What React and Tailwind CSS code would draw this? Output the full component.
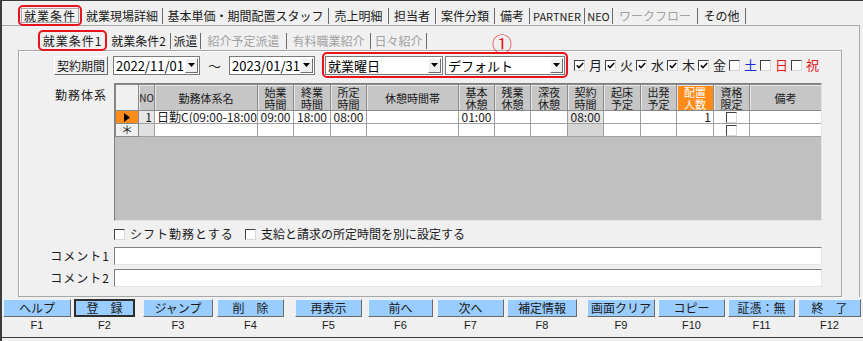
import React from "react";

const topTabs = [
  { t: "就業現場詳細", w: "w-[81px]" },
  { t: "基本単価・期間配置スタッフ", w: "w-[166px]" },
  { t: "売上明細", w: "w-[60px]" },
  { t: "担当者", w: "w-[47px]" },
  { t: "案件分類", w: "w-[59px]" },
  { t: "備考", w: "w-[35px]" },
  { t: "PARTNER", w: "w-[55px] text-[11px]" },
  { t: "NEO", w: "w-[28px] text-[11px]" },
  { t: "ワークフロー", w: "w-[85px]", off: true },
  { t: "その他", w: "w-[48px]" },
];

const subTabs = [
  { t: "就業条件2", w: "w-[64px]" },
  { t: "派遣", w: "w-[30px]" },
  { t: "紹介予定派遣", w: "w-[86px]", off: true },
  { t: "有料職業紹介", w: "w-[84px]", off: true },
  { t: "日々紹介", w: "w-[56px]", off: true },
];

const days = [
  { t: "月", on: true },
  { t: "火", on: true },
  { t: "水", on: true },
  { t: "木", on: true },
  { t: "金", on: true },
  { t: "土", c: "text-[#1d2bd8]" },
  { t: "日", c: "text-[#e8141c]" },
  { t: "祝", c: "text-[#e8141c]" },
];

const fkeys = [
  { t: "ヘルプ", f: "F1", cls: "ml-[1px] w-[68px]" },
  { t: "登　録", f: "F2", cls: "ml-[3px] w-[61px]", def: true },
  { t: "ジャンプ", f: "F3", cls: "ml-[8px] w-[70px]" },
  { t: "削　除", f: "F4", cls: "ml-[4px] w-[67px]" },
  { t: "再表示", f: "F5", cls: "ml-[11px] w-[67px]" },
  { t: "前へ", f: "F6", cls: "ml-[6px] w-[65px]" },
  { t: "次へ", f: "F7", cls: "ml-[4px] w-[67px]" },
  { t: "補定情報", f: "F8", cls: "ml-[3px] w-[70px]" },
  { t: "画面クリア", f: "F9", cls: "ml-[10px] w-[68px]" },
  { t: "コピー", f: "F10", cls: "ml-[3px] w-[67px]" },
  { t: "証憑：無", f: "F11", cls: "ml-[3px] w-[67px]" },
  { t: "終　了", f: "F12", cls: "ml-[3px] w-[63px]" },
];

const heads = [
  "NO",
  "勤務体系名",
  ["始業", "時間"],
  ["終業", "時間"],
  ["所定", "時間"],
  "休憩時間帯",
  ["基本", "休憩"],
  ["残業", "休憩"],
  ["深夜", "休憩"],
  ["契約", "時間"],
  ["起床", "予定"],
  ["出発", "予定"],
  ["配置", "人数"],
  ["資格", "限定"],
  "備考",
];

function Check({ on }) {
  return (
    <span className="inline-flex w-[11px] h-[11px] shrink-0 bg-white border-t border-l border-[#404040] border-r border-b border-r-[#d8d8d8] border-b-[#d8d8d8] items-center justify-center">
      {on && (
        <svg width="8" height="7" viewBox="0 0 8 7">
          <path d="M0.8 3.4 L3 5.6 L7.2 1" fill="none" stroke="#111" strokeWidth="1.6" />
        </svg>
      )}
    </span>
  );
}

function Combo({ cls, text }) {
  return (
    <div className={`flex h-[19px] bg-white border border-[#7a7a7a] ${cls}`}>
      <div className="flex-1 overflow-hidden whitespace-nowrap pl-[2px] text-[13px] leading-[17px] text-black">{text}</div>
      <div className="w-[13px] h-[15px] mt-[1px] mr-[1px] bg-[#f0f0f0] border border-t-white border-l-white border-r-[#707070] border-b-[#707070] flex items-center justify-center">
        <svg width="7" height="4" viewBox="0 0 7 4">
          <path d="M0 0h7L3.5 4z" fill="#000" />
        </svg>
      </div>
    </div>
  );
}

function Cell({ children, cls = "" }) {
  return (
    <td className={`border border-[#a0a0a0] p-0 px-[2px] text-[12px] leading-[12px] whitespace-nowrap overflow-hidden ${cls}`}>
      {children}
    </td>
  );
}

export default function App() {
  return (
    <div className="w-[863px] h-[341px] overflow-hidden bg-[#f0f0f0] border-l-2 border-t border-[#3c3c3c] text-[12px] text-[#1a1a1a] font-['Noto_Sans_CJK_JP','Noto_Sans',sans-serif] flex flex-col">
      {/* top tabs */}
      <div className="h-[24px] shrink-0 flex items-start pt-[4px] pl-[16px]">
        <div className="relative z-10 w-[64px] h-[21px] border-2 border-[#e8141c] rounded-[5px] p-[1px]">
          <div className="h-full border border-[#a8a8a8] bg-[#f0f0f0] shadow-[inset_1px_1px_0_#fff] flex items-center justify-center leading-[14px] tracking-[1px]">
            就業条件
          </div>
        </div>
        {topTabs.map((t) => (
          <div
            key={t.t}
            className={`${t.w} h-[16px] mt-[3px] border-r border-[#6a6a6a] text-center leading-[16px] whitespace-nowrap ${t.off ? "text-[#a0a0a0]" : ""}`}
          >
            {t.t}
          </div>
        ))}
      </div>

      {/* outer tab panel */}
      <div className="relative w-[858px] h-[272px] shrink-0 border-t border-r border-[#a8a8a8]">
        <span className="absolute left-[490px] top-[8px] text-[20px] leading-[20px] text-[#e8141c]">①</span>

        {/* sub tabs */}
        <div className="h-[24px] flex items-start pt-[4px] pl-[36px]">
          <div className="relative z-10 w-[69px] h-[21px] border-2 border-[#e8141c] rounded-[5px] p-[1px]">
            <div className="h-full bg-[#f0f0f0] flex items-center justify-center leading-[14px] tracking-[1px]">就業条件1</div>
          </div>
          {subTabs.map((t) => (
            <div
              key={t.t}
              className={`${t.w} h-[16px] mt-[3px] border-r border-[#6a6a6a] text-center leading-[16px] whitespace-nowrap ${t.off ? "text-[#a0a0a0]" : ""}`}
            >
              {t.t}
            </div>
          ))}
        </div>

        {/* inner panel */}
        <div className="ml-[16px] w-[824px] h-[247px] border border-[#a8a8a8] shadow-[inset_1px_1px_0_#fff]">
          {/* period row */}
          <div className="mt-[1px] h-[26px] flex items-center">
            <div className="w-[89px] flex justify-end">
              <div className="w-[54px] h-[19px] bg-[#f0f0f0] border border-t-white border-l-white border-r-[#6a6a6a] border-b-[#6a6a6a] text-center leading-[17px]">
                契約期間
              </div>
            </div>
            <Combo cls="ml-[5px] w-[87px]" text="2022/11/01" />
            <div className="w-[29px] text-center text-[13px] leading-[17px]">～</div>
            <Combo cls="w-[86px]" text="2023/01/31" />
            <div className="ml-[7px] w-[246px] h-[26px] border-2 border-[#e8141c] rounded-[5px] flex items-center">
              <Combo cls="ml-[1px] w-[118px]" text="就業曜日" />
              <Combo cls="ml-[2px] w-[120px]" text="デフォルト" />
            </div>
            <div className="ml-[6px] flex">
              {days.map((d) => (
                <div key={d.t} className="w-[31px] flex items-center gap-[4px]">
                  <Check on={d.on} />
                  <span className={`text-[13px] leading-[16px] ${d.c || ""}`}>{d.t}</span>
                </div>
              ))}
            </div>
          </div>

          {/* work pattern grid */}
          <div className="mt-[5px] flex">
            <div className="w-[89px] text-right pr-[1px] pt-[5px] leading-[14px] tracking-[1px]">勤務体系</div>
            <div className="ml-[6px] w-[708px] h-[138px] bg-[#c0c0c0] border border-t-[#808080] border-l-[#808080] border-r-[#e4e4e4] border-b-[#e4e4e4] overflow-hidden">
              <table className="table-fixed border-collapse w-[706px]">
                <colgroup>
                  <col className="w-[23px]" />
                  <col className="w-[16px]" />
                  <col className="w-[103px]" />
                  <col className="w-[36px]" />
                  <col className="w-[37px]" />
                  <col className="w-[36px]" />
                  <col className="w-[92px]" />
                  <col className="w-[36px]" />
                  <col className="w-[36px]" />
                  <col className="w-[37px]" />
                  <col className="w-[36px]" />
                  <col className="w-[37px]" />
                  <col className="w-[36px]" />
                  <col className="w-[37px]" />
                  <col className="w-[36px]" />
                  <col className="w-[72px]" />
                </colgroup>
                <thead>
                  <tr className="h-[26px]">
                    <th className="bg-[#f0f0f0] border border-[#8a8a8a] p-0" />
                    {heads.map((h, i) => {
                      const hot = i === 12;
                      return (
                        <th
                          key={i}
                          className={`border border-[#8a8a8a] p-0 font-normal text-center align-middle leading-[12px] shadow-[inset_1px_1px_0_#e8e8e8] ${
                            hot ? "bg-[#ff8c1a] text-white" : "bg-[#c6c6c6] text-[#1a1a1a]"
                          } ${i === 0 ? "text-[10px]" : "text-[11px]"}`}
                        >
                          {Array.isArray(h) ? (
                            <>
                              {h[0]}
                              <br />
                              {h[1]}
                            </>
                          ) : (
                            h
                          )}
                        </th>
                      );
                    })}
                  </tr>
                </thead>
                <tbody>
                  <tr className="h-[13px]">
                    <td className="border border-[#8a8a8a] p-0 bg-[#ff8c1a]">
                      <div className="flex justify-center">
                        <svg width="6" height="9" viewBox="0 0 6 9">
                          <path d="M0 0L6 4.5L0 9z" fill="#000" />
                        </svg>
                      </div>
                    </td>
                    <Cell cls="bg-[#e6e6e6] text-right">1</Cell>
                    <Cell cls="bg-white">日勤C(09:00-18:00)</Cell>
                    <Cell cls="bg-white text-center">09:00</Cell>
                    <Cell cls="bg-white text-center">18:00</Cell>
                    <Cell cls="bg-white text-center">08:00</Cell>
                    <Cell cls="bg-white" />
                    <Cell cls="bg-white text-center">01:00</Cell>
                    <Cell cls="bg-white" />
                    <Cell cls="bg-white" />
                    <Cell cls="bg-[#e6e6e6] text-center">08:00</Cell>
                    <Cell cls="bg-white" />
                    <Cell cls="bg-white" />
                    <Cell cls="bg-white text-right">1</Cell>
                    <Cell cls="bg-white text-center">
                      <div className="flex justify-center">
                        <Check />
                      </div>
                    </Cell>
                    <Cell cls="bg-white" />
                  </tr>
                  <tr className="h-[13px]">
                    <td className="border border-[#8a8a8a] p-0 bg-[#f0f0f0] text-center text-[12px] leading-[12px]">＊</td>
                    <Cell cls="bg-[#e0e0e0]" />
                    <Cell cls="bg-white" />
                    <Cell cls="bg-white" />
                    <Cell cls="bg-white" />
                    <Cell cls="bg-white" />
                    <Cell cls="bg-white" />
                    <Cell cls="bg-white" />
                    <Cell cls="bg-white" />
                    <Cell cls="bg-white" />
                    <Cell cls="bg-[#d6d6d6]" />
                    <Cell cls="bg-white" />
                    <Cell cls="bg-white" />
                    <Cell cls="bg-white" />
                    <Cell cls="bg-white">
                      <div className="flex justify-center">
                        <Check />
                      </div>
                    </Cell>
                    <Cell cls="bg-white" />
                  </tr>
                </tbody>
              </table>
            </div>
          </div>

          {/* option checks */}
          <div className="mt-[6px] h-[14px] flex items-center pl-[95px]">
            <div className="w-[131px] flex items-center gap-[5px]">
              <Check />
              <span className="leading-[14px] tracking-[1px]">シフト勤務とする</span>
            </div>
            <div className="flex items-center gap-[5px]">
              <Check />
              <span className="leading-[14px]">支給と請求の所定時間を別に設定する</span>
            </div>
          </div>

          {/* comments */}
          <div className="mt-[6px] flex items-center">
            <div className="w-[91px] text-right leading-[14px] tracking-[1px]">コメント1</div>
            <div className="ml-[4px] w-[708px] h-[18px] bg-white border border-t-[#808080] border-l-[#808080] border-r-[#e4e4e4] border-b-[#e4e4e4]" />
          </div>
          <div className="mt-[4px] flex items-center">
            <div className="w-[91px] text-right leading-[14px] tracking-[1px]">コメント2</div>
            <div className="ml-[4px] w-[708px] h-[18px] bg-white border border-t-[#808080] border-l-[#808080] border-r-[#e4e4e4] border-b-[#e4e4e4]" />
          </div>
        </div>
      </div>

      {/* function keys */}
      <div className="h-[41px] shrink-0 flex pt-[2px] border-b border-[#3c3c3c]">
        {fkeys.map((k) => (
          <div key={k.f} className={`${k.cls} flex flex-col`}>
            <div
              className={`h-[18px] bg-[#99ccff] text-center text-[#1a1a1a] whitespace-nowrap ${
                k.def
                  ? "border-2 border-[#2e2e2e] leading-[14px]"
                  : "border border-t-[#e8f4ff] border-l-[#e8f4ff] border-r-[#6a6a6a] border-b-[#6a6a6a] leading-[16px]"
              }`}
            >
              {k.t}
            </div>
            <div className="text-center text-[11px] leading-[16px] font-['Liberation_Sans',sans-serif]">{k.f}</div>
          </div>
        ))}
      </div>
    </div>
  );
}
